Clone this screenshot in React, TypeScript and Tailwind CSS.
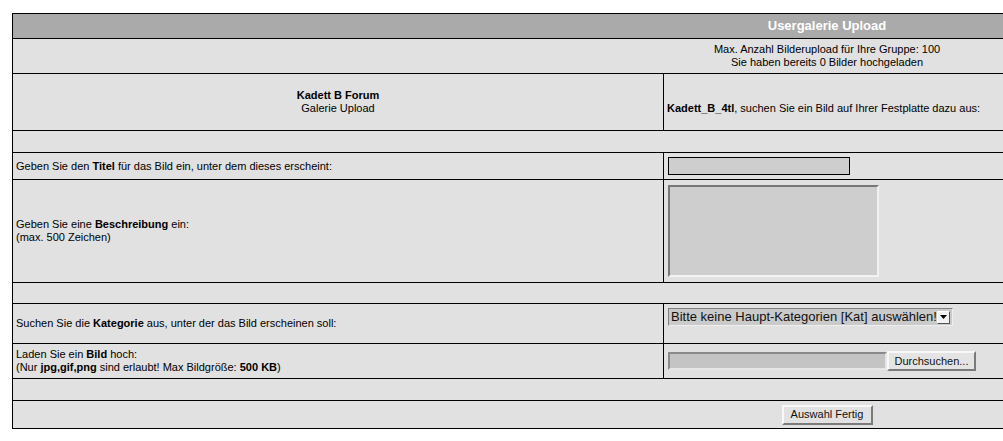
import React from "react";

const font = { fontFamily: '"Liberation Sans", Arial, sans-serif' };

function Row({
  h,
  left,
  right,
  divider,
  last,
  rightClass = "",
  leftClass = "",
  header,
}: {
  h: string;
  left?: React.ReactNode;
  right?: React.ReactNode;
  divider?: boolean;
  last?: boolean;
  rightClass?: string;
  leftClass?: string;
  header?: boolean;
}) {
  return (
    <div
      className={`flex ${h} ${last ? "" : "border-b border-black"} ${
        header ? "bg-[#aaaaaa]" : "bg-[#e1e1e1]"
      }`}
    >
      <div className={`w-[650px] shrink-0 flex ${leftClass}`}>{left}</div>
      <div
        className={`w-[327px] shrink-0 flex ${divider ? "border-l border-black" : "pl-px"} ${rightClass}`}
      >
        {right}
      </div>
      <div className="flex-1" />
    </div>
  );
}

export default function App() {
  return (
    <div className="w-[1003px] h-[441px] overflow-hidden bg-white text-[11px] leading-[13px] text-black" style={font}>
      <div className="pt-[13px] pl-[12px]">
        <div className="w-[1010px] border border-black">
          <Row
            h="h-[25px]"
            header
            rightClass="items-center justify-center"
            right={<span className="text-white font-bold text-[13px] leading-[16px]">Usergalerie Upload</span>}
          />
          <Row
            h="h-[35px]"
            rightClass="items-center justify-center text-center"
            right={
              <div>
                Max. Anzahl Bilderupload für Ihre Gruppe: 100
                <br />
                Sie haben bereits 0 Bilder hochgeladen
              </div>
            }
          />
          <Row
            h="h-[57px]"
            divider
            leftClass="items-center justify-center text-center"
            left={
              <div>
                <b>Kadett B Forum</b>
                <br />
                Galerie Upload
              </div>
            }
            rightClass="items-center pt-[13px] pl-[3px]"
            right={
              <div className="whitespace-nowrap">
                <b>Kadett_B_4tl</b>, suchen Sie ein Bild auf Ihrer Festplatte dazu aus:
              </div>
            }
          />
          <Row h="h-[22px]" />
          <Row
            h="h-[27px]"
            divider
            leftClass="items-center pl-[3px]"
            left={
              <div>
                Geben Sie den <b>Titel</b> für das Bild ein, unter dem dieses erscheint:
              </div>
            }
            rightClass="items-center pl-[4px]"
            right={<div className="w-[182px] h-[18px] border border-black bg-[#cecece]" />}
          />
          <Row
            h="h-[103px]"
            divider
            leftClass="items-center pl-[3px]"
            left={
              <div>
                Geben Sie eine <b>Beschreibung</b> ein:
                <br />
                (max. 500 Zeichen)
              </div>
            }
            rightClass="items-center pl-[4px]"
            right={
              <div className="w-[211px] h-[92px] border-2 border-t-[#777777] border-l-[#777777] border-b-[#f2f2f2] border-r-[#f2f2f2] bg-[#cecece]" />
            }
          />
          <Row h="h-[21px]" />
          <Row
            h="h-[40px]"
            divider
            leftClass="items-center pl-[3px]"
            left={
              <div>
                Suchen Sie die <b>Kategorie</b> aus, unter der das Bild erscheinen soll:
              </div>
            }
            rightClass="items-start pt-[4px] pl-[4px]"
            right={
              <div className="w-[285px] h-[18px] flex items-center justify-between bg-[#cacaca] border border-t-[#808080] border-l-[#808080] border-b-[#eeeeee] border-r-[#eeeeee] pl-[2px] pr-[2px]">
                <span className="text-[13px] leading-[16px] whitespace-nowrap text-[#111]">
                  Bitte keine Haupt-Kategorien [Kat] auswählen!
                </span>
                <span className="w-[15px] h-[13px] flex items-center justify-center bg-[#f2f2f2] border border-t-white border-l-white border-b-[#555] border-r-[#555]">
                  <svg width="7" height="4" viewBox="0 0 7 4">
                    <path d="M0 0H7L3.5 4Z" fill="#000" />
                  </svg>
                </span>
              </div>
            }
          />
          <Row
            h="h-[35px]"
            divider
            leftClass="items-center pl-[3px]"
            left={
              <div>
                Laden Sie ein <b>Bild</b> hoch:
                <br />
                (Nur <b>jpg,gif,png</b> sind erlaubt! Max Bildgröße: <b>500 KB</b>)
              </div>
            }
            rightClass="items-center pl-[4px]"
            right={
              <div className="flex items-center">
                <div className="w-[219px] h-[18px] bg-[#c4c4c4] border-2 border-t-[#8a8a8a] border-l-[#8a8a8a] border-b-[#e6e6e6] border-r-[#e6e6e6]" />
                <div className="w-[89px] h-[20px] flex items-center justify-center bg-[#e4e4e4] border-2 border-t-[#f8f8f8] border-l-[#f8f8f8] border-b-[#7a7a7a] border-r-[#7a7a7a] text-[11px] text-[#111]">
                  Durchsuchen...
                </div>
              </div>
            }
          />
          <Row h="h-[22px]" />
          <Row
            h="h-[27px]"
            last
            rightClass="items-center justify-center"
            right={
              <div className="w-[91px] h-[20px] flex items-center justify-center bg-[#e2e2e2] border-2 border-t-[#f8f8f8] border-l-[#f8f8f8] border-b-[#7a7a7a] border-r-[#7a7a7a] text-[11px] text-[#111]">
                Auswahl Fertig
              </div>
            }
          />
        </div>
      </div>
    </div>
  );
}
